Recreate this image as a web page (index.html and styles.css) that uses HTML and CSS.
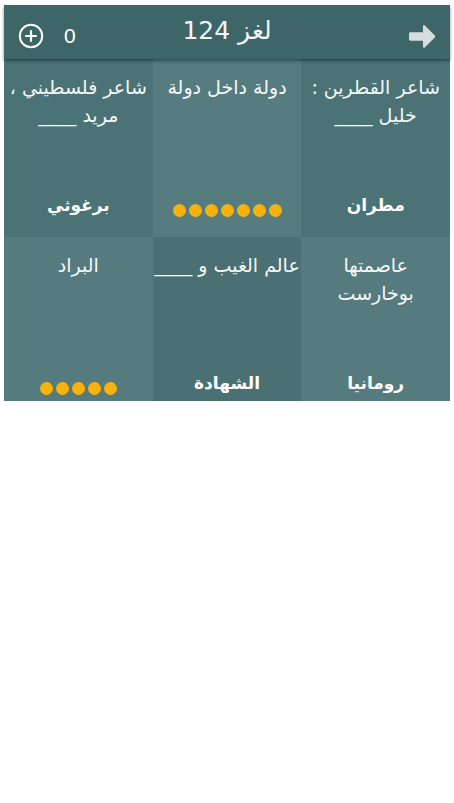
FILE: index.html
```html
<!DOCTYPE html>
<html lang="ar">
<head>
<meta charset="utf-8">
<title>لغز 124</title>
<link rel="stylesheet" href="styles.css">
</head>
<body>
<div class="screen">
  <header class="topbar">
    <div class="coins">
      <svg class="plus" width="26" height="26" viewBox="0 0 26 26" aria-hidden="true">
        <circle cx="13" cy="13" r="11.2" fill="none" stroke="#ffffff" stroke-width="2"/>
        <path d="M13 8v10M8 13h10" stroke="#ffffff" stroke-width="2.2" stroke-linecap="round"/>
      </svg>
      <span class="count">0</span>
    </div>
    <h1 class="title">لغز 124</h1>
    <div class="next">
      <svg width="27" height="25" viewBox="0 0 27 25" aria-hidden="true">
        <path d="M1.5 8.2h12.5V2.2c0-1 1-1.4 1.8-.7l10 10c.6.6.6 1.4 0 2l-10 10c-.8.7-1.8.3-1.8-.7v-6H1.5c-.8 0-1.5-.7-1.5-1.5v-5.6c0-.8.7-1.5 1.5-1.5z" fill="#d6dddd"/>
      </svg>
    </div>
  </header>
  <main class="board">
    <div class="cell">
      <p class="q"><span>شاعر القطرين :</span><span>خليل ____</span></p>
      <p class="a">مطران</p>
    </div>
    <div class="cell">
      <p class="q"><span>دولة داخل دولة</span></p>
      <div class="dots"><i></i><i></i><i></i><i></i><i></i><i></i><i></i></div>
    </div>
    <div class="cell">
      <p class="q"><span>شاعر فلسطيني ،</span><span>مريد ____</span></p>
      <p class="a">برغوثي</p>
    </div>
    <div class="cell">
      <p class="q"><span>عاصمتها</span><span>بوخارست</span></p>
      <p class="a">رومانيا</p>
    </div>
    <div class="cell">
      <p class="q"><span>عالم الغيب و ____</span></p>
      <p class="a">الشهادة</p>
    </div>
    <div class="cell">
      <p class="q"><span>البراد</span></p>
      <div class="dots"><i></i><i></i><i></i><i></i><i></i></div>
    </div>
  </main>
</div>
</body>
</html>
```

FILE: styles.css
```css
* { box-sizing: border-box; }

html, body {
  margin: 0;
  padding: 0;
  background: #ffffff;
}

body {
  font-family: "DejaVu Sans", "Noto Sans", sans-serif;
  color: #ffffff;
}

.screen {
  padding: 5px 4px 0 4px;
}

.topbar {
  position: relative;
  z-index: 2;
  height: 54px;
  background: #3e6568;
  display: grid;
  grid-template-columns: 1fr auto 1fr;
  align-items: center;
  box-shadow: 0 2px 3px rgba(20, 40, 42, 0.55);
}

.coins {
  display: flex;
  align-items: center;
  gap: 20px;
  padding-left: 14px;
  padding-top: 8px;
}

.plus { display: block; }

.count {
  font-family: "Liberation Sans", sans-serif;
  font-size: 21px;
  color: #ffffff;
}

.title {
  margin: 0;
  font-size: 25px;
  font-weight: normal;
  color: #f2f5f5;
  direction: rtl;
  padding-bottom: 4px;
}

.next {
  display: flex;
  justify-content: flex-end;
  padding-right: 14px;
  padding-top: 9px;
}

.next svg { display: block; }

.board {
  direction: rtl;
  display: grid;
  grid-template-columns: repeat(3, 1fr);
  grid-auto-rows: 178px;
  height: 342px;
  overflow: hidden;
}

.cell {
  display: flex;
  flex-direction: column;
  justify-content: space-between;
  align-items: center;
  padding: 14px 0 20px;
  overflow: hidden;
  min-width: 0;
}

.board .cell:nth-child(1),
.board .cell:nth-child(3) { background: #4b7376; }
.board .cell:nth-child(2) { background: #567c7f; }
.board .cell:nth-child(4),
.board .cell:nth-child(6) { background: #567b7e; }
.board .cell:nth-child(5) { background: #4a7073; }

.q {
  margin: 0;
  display: flex;
  flex-direction: column;
  align-items: center;
  font-size: 19px;
  line-height: 28px;
  color: #f4f7f7;
  white-space: nowrap;
}

.a {
  margin: 0;
  font-size: 17px;
  font-weight: bold;
  line-height: 22px;
  color: #ffffff;
  margin-bottom: 1px;
}

.dots {
  display: flex;
  gap: 3px;
  margin-bottom: 0.5px;
}

.dots i {
  display: block;
  width: 13px;
  height: 13px;
  border-radius: 50%;
  background: #f6b30f;
}
```
